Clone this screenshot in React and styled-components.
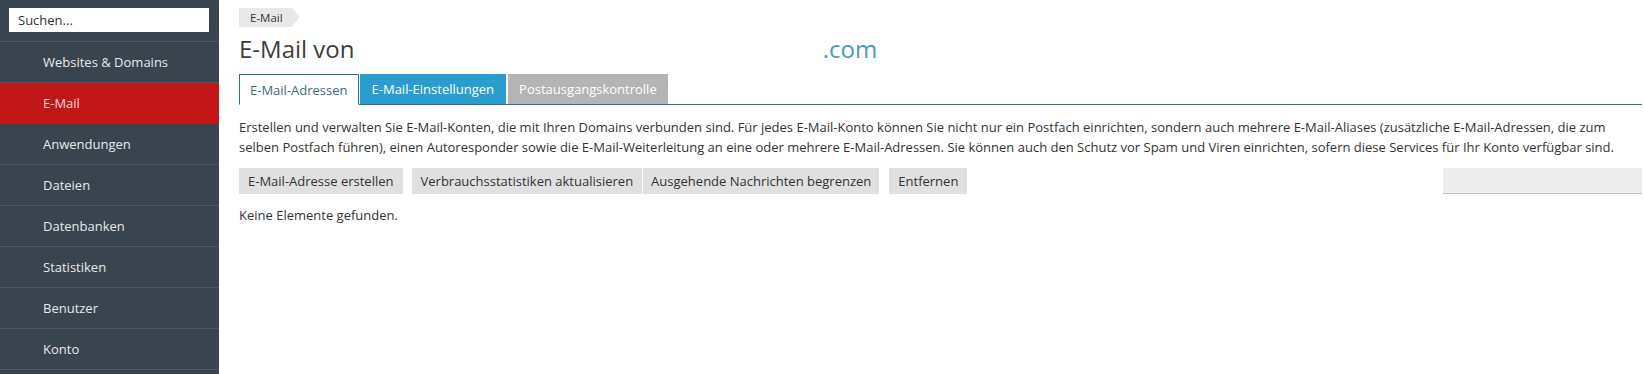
import React from 'react';
import styled, { createGlobalStyle } from 'styled-components';

const GlobalStyle = createGlobalStyle`
  html, body {
    margin: 0;
    padding: 0;
    background: #fff;
    font-family: "Open Sans", "Liberation Sans", sans-serif;
    font-size: 13px;
    color: #333;
  }
`;

const Layout = styled.div`
  display: flex;
  height: 374px;
  overflow: hidden;
`;

const Sidebar = styled.nav`
  width: 219px;
  flex-shrink: 0;
  background: #3a444f;
`;

const SearchArea = styled.div`
  height: 42px;
  padding: 8px 10px 0 9px;
  box-sizing: border-box;
  border-bottom: 1px solid #4d5762;
`;

const SearchInput = styled.input`
  width: 200px;
  height: 24px;
  box-sizing: border-box;
  border: none;
  outline: none;
  padding: 0 9px;
  font-family: inherit;
  font-size: 13px;
  color: #333;
  &::placeholder {
    color: #333;
  }
`;

const NavList = styled.ul`
  list-style: none;
  margin: 0;
  padding: 0;
`;

const NavItem = styled.li`
  height: 40px;
  display: flex;
  align-items: center;
  padding-left: 43px;
  border-bottom: 1px solid ${({ active }) => (active ? '#c41616' : '#4d5762')};
  background: ${({ active }) => (active ? '#c41616' : 'transparent')};
  color: ${({ active }) => (active ? '#f6dede' : '#e6e8ea')};
  font-size: 13px;
`;

const Main = styled.main`
  flex: 1;
  padding: 8px 2px 0 20px;
  min-width: 0;
`;

const Crumb = styled.div`
  display: inline-flex;
  align-items: center;
  height: 19px;
  padding: 0 9px 0 11px;
  background: #e8e8e8;
  font-size: 11.5px;
  color: #333;
  position: relative;
  margin-right: 8px;
  &::after {
    content: '';
    position: absolute;
    right: -8px;
    top: 0;
    border-top: 9.5px solid transparent;
    border-bottom: 9.5px solid transparent;
    border-left: 8px solid #e8e8e8;
  }
`;

const Title = styled.h1`
  margin: 6px 0 0;
  font-weight: 400;
  font-size: 24px;
  line-height: 32px;
  color: #3d3d3d;
  display: flex;
  align-items: baseline;
`;

const Hidden = styled.span`
  display: inline-block;
  width: 462px;
`;

const Domain = styled.span`
  color: #4a96cf;
`;

const Tabs = styled.div`
  display: flex;
  margin-top: 9px;
  border-bottom: 1px solid #2f6f8c;
`;

const Tab = styled.div`
  height: 31px;
  display: flex;
  align-items: center;
  padding: 0 ${({ pad }) => pad}px;
  margin-right: ${({ gap }) => gap}px;
  box-sizing: border-box;
  font-size: 13px;
  margin-bottom: -1px;
  ${({ variant }) =>
    variant === 'active'
      ? `background: #fff; color: #3b6a82; border: 1px solid #2f6f8c; border-bottom-color: #fff;`
      : variant === 'blue'
      ? `background: #2a9dd0; color: #fff; border-bottom: 1px solid #2f6f8c;`
      : `background: #b4b4b4; color: #fff; border-bottom: 1px solid #2f6f8c;`}
`;

const Description = styled.p`
  margin: 12px 0 0;
  line-height: 20px;
  font-size: 13px;
  color: #333;
  padding-right: 20px;
`;

const Toolbar = styled.div`
  display: flex;
  align-items: stretch;
  margin-top: 11px;
  height: 26px;
`;

const Group = styled.div`
  display: flex;
  gap: 1px;
  margin-right: ${({ gap }) => gap || 9}px;
`;

const Button = styled.button`
  border: none;
  background: #e0e0e0;
  color: #333;
  font-family: inherit;
  font-size: 13px;
  padding: 0 ${({ pad }) => pad || 9}px;
  height: 26px;
  cursor: pointer;
`;

const Spacer = styled.div`
  flex: 1;
`;

const FilterBox = styled.div`
  width: 199px;
  height: 26px;
  box-sizing: border-box;
  background: #ececec;
  border-bottom: 1px solid #c2c2c2;
`;

const Empty = styled.div`
  margin-top: 12px;
  font-size: 13px;
  color: #333;
`;

const navItems = [
  'Websites & Domains',
  'E-Mail',
  'Anwendungen',
  'Dateien',
  'Datenbanken',
  'Statistiken',
  'Benutzer',
  'Konto',
];

export default function App() {
  return (
    <>
      <GlobalStyle />
      <Layout>
        <Sidebar>
          <SearchArea>
            <SearchInput placeholder="Suchen..." />
          </SearchArea>
          <NavList>
            {navItems.map((item) => (
              <NavItem key={item} active={item === 'E-Mail'}>
                {item}
              </NavItem>
            ))}
          </NavList>
        </Sidebar>
        <Main>
          <Crumb>E-Mail</Crumb>
          <Title>
            E-Mail von&nbsp;<Hidden />
            <Domain>.com</Domain>
          </Title>
          <Tabs>
            <Tab variant="active" pad={10} gap={1}>E-Mail-Adressen</Tab>
            <Tab variant="blue" pad={12} gap={2}>E-Mail-Einstellungen</Tab>
            <Tab variant="gray" pad={11} gap={0}>Postausgangskontrolle</Tab>
          </Tabs>
          <Description>
            Erstellen und verwalten Sie E-Mail-Konten, die mit Ihren Domains verbunden sind. Für jedes
            E-Mail-Konto können Sie nicht nur ein Postfach einrichten, sondern auch mehrere E-Mail-Aliases
            (zusätzliche E-Mail-Adressen, die zum selben Postfach führen), einen Autoresponder sowie die
            E-Mail-Weiterleitung an eine oder mehrere E-Mail-Adressen. Sie können auch den Schutz vor Spam
            und Viren einrichten, sofern diese Services für Ihr Konto verfügbar sind.
          </Description>
          <Toolbar>
            <Group>
              <Button>E-Mail-Adresse erstellen</Button>
            </Group>
            <Group gap={10}>
              <Button>Verbrauchsstatistiken aktualisieren</Button>
              <Button pad={8}>Ausgehende Nachrichten begrenzen</Button>
            </Group>
            <Group>
              <Button>Entfernen</Button>
            </Group>
            <Spacer />
            <FilterBox />
          </Toolbar>
          <Empty>Keine Elemente gefunden.</Empty>
        </Main>
      </Layout>
    </>
  );
}
